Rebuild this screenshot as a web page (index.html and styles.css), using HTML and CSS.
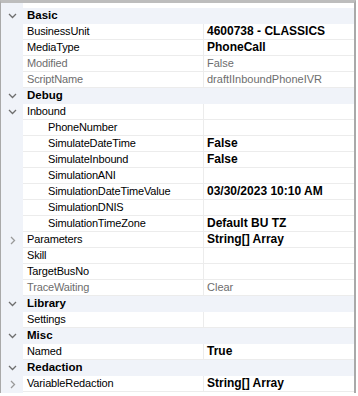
FILE: index.html
```html
<!DOCTYPE html>
<html lang="en">
<head>
    <meta charset="UTF-8">
    <title>Properties</title>
    <link rel="stylesheet" href="styles.css">
</head>
<body>
    <div class="grid">
        <div class="cat">
            <span class="gut"><svg class="down" width="9" height="6" viewBox="0 0 9 6"><path d="M1 1 L4.5 4.5 L8 1"/></svg></span>
            <span class="cat-label">Basic</span>
        </div>
        <div class="prop"><span class="gut"></span><span class="name">BusinessUnit</span><span class="val strong">4600738 - CLASSICS</span></div>
        <div class="prop"><span class="gut"></span><span class="name">MediaType</span><span class="val strong">PhoneCall</span></div>
        <div class="prop ro"><span class="gut"></span><span class="name">Modified</span><span class="val">False</span></div>
        <div class="prop ro"><span class="gut"></span><span class="name">ScriptName</span><span class="val">draftIInboundPhoneIVR</span></div>

        <div class="cat">
            <span class="gut"><svg class="down" width="9" height="6" viewBox="0 0 9 6"><path d="M1 1 L4.5 4.5 L8 1"/></svg></span>
            <span class="cat-label">Debug</span>
        </div>
        <div class="prop">
            <span class="gut"><svg class="down" width="9" height="6" viewBox="0 0 9 6"><path d="M1 1 L4.5 4.5 L8 1"/></svg></span>
            <span class="name">Inbound</span><span class="val"></span>
        </div>
        <div class="prop sub"><span class="gut"></span><span class="name">PhoneNumber</span><span class="val"></span></div>
        <div class="prop sub"><span class="gut"></span><span class="name">SimulateDateTime</span><span class="val strong">False</span></div>
        <div class="prop sub"><span class="gut"></span><span class="name">SimulateInbound</span><span class="val strong">False</span></div>
        <div class="prop sub"><span class="gut"></span><span class="name">SimulationANI</span><span class="val"></span></div>
        <div class="prop sub"><span class="gut"></span><span class="name">SimulationDateTimeValue</span><span class="val strong">03/30/2023 10:10 AM</span></div>
        <div class="prop sub"><span class="gut"></span><span class="name">SimulationDNIS</span><span class="val"></span></div>
        <div class="prop sub"><span class="gut"></span><span class="name">SimulationTimeZone</span><span class="val strong">Default BU TZ</span></div>
        <div class="prop">
            <span class="gut"><svg class="right" width="6" height="9" viewBox="0 0 6 9"><path d="M1 1 L4.5 4.5 L1 8"/></svg></span>
            <span class="name">Parameters</span><span class="val strong">String[] Array</span>
        </div>
        <div class="prop"><span class="gut"></span><span class="name">Skill</span><span class="val"></span></div>
        <div class="prop"><span class="gut"></span><span class="name">TargetBusNo</span><span class="val"></span></div>
        <div class="prop ro"><span class="gut"></span><span class="name">TraceWaiting</span><span class="val">Clear</span></div>

        <div class="cat">
            <span class="gut"><svg class="down" width="9" height="6" viewBox="0 0 9 6"><path d="M1 1 L4.5 4.5 L8 1"/></svg></span>
            <span class="cat-label">Library</span>
        </div>
        <div class="prop"><span class="gut"></span><span class="name">Settings</span><span class="val"></span></div>

        <div class="cat">
            <span class="gut"><svg class="down" width="9" height="6" viewBox="0 0 9 6"><path d="M1 1 L4.5 4.5 L8 1"/></svg></span>
            <span class="cat-label">Misc</span>
        </div>
        <div class="prop"><span class="gut"></span><span class="name">Named</span><span class="val strong">True</span></div>

        <div class="cat">
            <span class="gut"><svg class="down" width="9" height="6" viewBox="0 0 9 6"><path d="M1 1 L4.5 4.5 L8 1"/></svg></span>
            <span class="cat-label">Redaction</span>
        </div>
        <div class="prop">
            <span class="gut"><svg class="right" width="6" height="9" viewBox="0 0 6 9"><path d="M1 1 L4.5 4.5 L1 8"/></svg></span>
            <span class="name">VariableRedaction</span><span class="val strong">String[] Array</span>
        </div>
    </div>
</body>
</html>
```

FILE: styles.css
```css
body {
    margin: 0;
    background: white;
    font-family: 'Liberation Sans', Arial, sans-serif;
    font-size: 11px;
    color: #000;
}

.grid {
    width: 356px;
    height: 393px;
    border-top: 3px solid #bdbdbd;
    border-left: 1px solid #a9a9a9;
    border-right: 2px solid #a9a9a9;
    padding-top: 5px;
    box-sizing: border-box;
    background: linear-gradient(to right, #f0f3f9 22px, white 22px);
}

.cat, .prop {
    display: flex;
    height: 16px;
    line-height: 15px;
}

.cat {
    background: #f0f3f9;
}

.gut {
    width: 22px;
    flex: none;
    display: flex;
    align-items: center;
    background: #f0f3f9;
}

.gut .down {
    margin-left: 7px;
    fill: none;
    stroke: #6e6e6e;
    stroke-width: 1.3;
}

.gut .right {
    margin-left: 9px;
    fill: none;
    stroke: #9a9a9a;
    stroke-width: 1.3;
}

.cat-label {
    padding-left: 4px;
    font-weight: bold;
    font-size: 11.5px;
}

.name {
    width: 181px;
    flex: none;
    box-sizing: border-box;
    padding-left: 4px;
    border-right: 1px solid #ececec;
    border-bottom: 1px solid #ececec;
    letter-spacing: -0.15px;
    white-space: nowrap;
    overflow: hidden;
}

.sub .name {
    padding-left: 25px;
}

.val {
    flex: 1;
    padding-left: 3px;
    border-bottom: 1px solid #ececec;
    white-space: nowrap;
}

.strong {
    font-weight: bold;
    font-size: 12px;
}

.ro .name, .ro .val {
    color: #6d6d6d;
}
```
